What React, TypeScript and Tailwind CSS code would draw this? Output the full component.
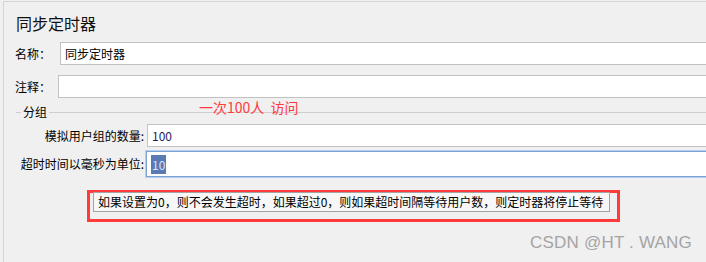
const cjk = { fontFamily: '"Noto Sans CJK SC", "Noto Sans", sans-serif' };

const FieldRow = ({
  label,
  labelWidth,
  value,
}: {
  label: string;
  labelWidth: string;
  value: string;
}) => (
  <div className="flex items-center">
    <span className={`${labelWidth} text-[12px] leading-[16px] text-black`}>{label}</span>
    <div className="flex-1 h-[23px] bg-white border border-r-0 border-[#c2c2c2] flex items-center pl-[4px] text-[12px] text-black">
      {value}
    </div>
  </div>
);

export default function App() {
  return (
    <div className="w-[706px] h-[262px] bg-[#f0f0f0] overflow-hidden relative" style={cjk}>
      <div className="ml-[3px] mt-[1px] h-[261px] border-t border-l border-[#d4d4d4] pl-[11px]">
        {/* Title */}
        <h1 className="mt-[11px] ml-[1px] text-[16px] leading-[20px] text-[#111]">同步定时器</h1>

        <div className="mt-[9px]">
          <FieldRow label="名称：" labelWidth="w-[45px]" value="同步定时器" />
        </div>
        <div className="mt-[10px]">
          <FieldRow label="注释：" labelWidth="w-[43px]" value="" />
        </div>

        {/* Group fieldset */}
        <div className="relative mt-[6px] pl-[1px]">
          <div className="flex items-center h-[16px]">
            <div className="w-[5px] h-px bg-[#cfcfcf]" />
            <span className="px-[2px] text-[12px] leading-[16px] text-black">分组</span>
            <div className="flex-1 h-px bg-[#cfcfcf]" />
          </div>
          <span className="absolute left-[184px] top-[-6px] text-[14px] leading-[18px] text-[#ff3a3a]">
            一次100人&nbsp;&nbsp;访问
          </span>

          <div className="mt-[4px] flex items-center">
            <span className="w-[131px] pr-[3px] text-right text-[12px] leading-[16px] text-black">
              模拟用户组的数量:
            </span>
            <div className="flex-1 h-[23px] bg-white border border-r-0 border-[#c2c2c2] flex items-center pl-[4px] text-[12px] text-[#1c1c5c]">
              100
            </div>
          </div>

          <div className="mt-[4px] flex items-center">
            <span className="w-[131px] pr-[3px] text-right text-[12px] leading-[16px] text-black">
              超时时间以毫秒为单位:
            </span>
            <div className="-ml-px flex-1 h-[26px] bg-white border border-r-0 border-[#7ea1d4] shadow-[0_0_0_1px_#b4d0f1] flex items-center pl-[4px]">
              <span className="bg-[#5b79b3] text-[#d6e4ff] text-[12px] leading-[19px] px-px">10</span>
            </div>
          </div>

          {/* Highlighted hint */}
          <div className="mt-[13px] ml-[71px] w-[533px] border-[3px] border-[#ff3b3b] pl-[3px] pb-[7px]">
            <div className="-mt-px w-[517px] h-[20px] bg-[#f7f7f7] border border-[#a3a3a3] flex items-center pl-[4px] text-[12px] text-black whitespace-nowrap">
              如果设置为0，则不会发生超时，如果超过0，则如果超时间隔等待用户数，则定时器将停止等待
            </div>
          </div>
        </div>
      </div>

      <span
        className="absolute right-[14px] bottom-[9px] text-[17px] leading-[20px] text-[#a4a4a4] tracking-[0.2px]"
        style={{ fontFamily: '"Liberation Sans", Arial, sans-serif' }}
      >
        CSDN @HT . WANG
      </span>
    </div>
  );
}
